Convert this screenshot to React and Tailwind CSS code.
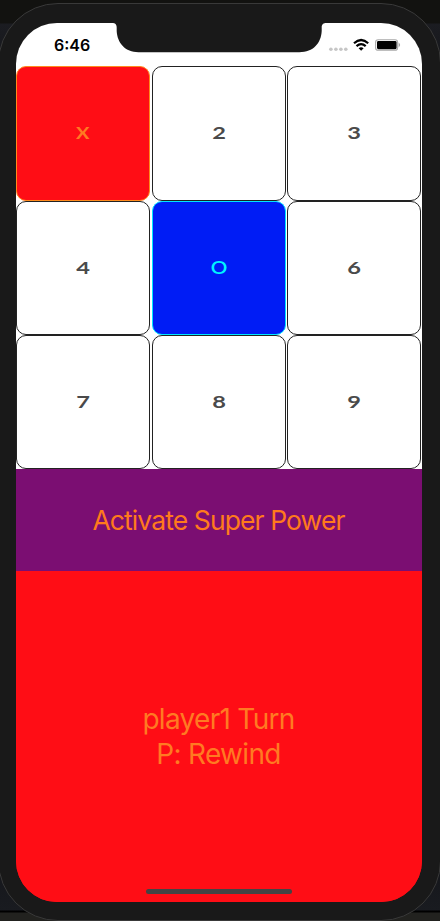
const cells = [
  { label: 'X', style: 'border-[#ff8a1c] bg-[#ff0d15] text-[#ff7a22]', text: 'scale-x-[1.15] font-bold' },
  { label: '2' },
  { label: '3' },
  { label: '4' },
  { label: 'O', style: 'border-[#00e5ff] bg-[#001cf5] text-[#00f4ff]', text: 'scale-x-[1.18] font-semibold' },
  { label: '6' },
  { label: '7' },
  { label: '8' },
  { label: '9' },
];

function StatusIcons() {
  return (
    <svg className="absolute top-[15px] left-[312px]" width="76" height="16" viewBox="0 0 76 16">
      <g fill="#c6c6c6">
        <circle cx="2.9" cy="11.2" r="1.8" />
        <circle cx="7.9" cy="11.2" r="1.8" />
        <circle cx="12.9" cy="11.2" r="1.8" />
        <circle cx="17.8" cy="11.2" r="1.8" />
      </g>
      <g fill="none" stroke="#000" strokeWidth="2.2">
        <path d="M26 5.3Q33.1-1.3 40.2 5.3" />
        <path d="M28.5 8.1Q33.1 4 37.7 8.1" />
      </g>
      <path d="M30.6 10.3Q33.1 8.3 35.6 10.3L33.1 12.8Z" />
      <rect x="47.6" y="1.7" width="22" height="10.6" rx="2.6" fill="white" stroke="#a9a9a9" strokeWidth="1.1" />
      <rect x="49" y="3" width="19.6" height="8.2" rx="1.4" />
      <path d="M70.6 4.6q3 2.4 0 4.8z" fill="#a0a0a0" />
    </svg>
  );
}

function Notch() {
  return (
    <svg className="absolute top-0 left-[96px]" width="218" height="30" viewBox="0 0 218 30">
      <path d="M0 0C3.2 0 4.6 1.2 4.6 4.5V8C5.2 20 13 29.2 26 29.2H184C198 29.2 205.4 20 206 8V4.5C206 1.2 207.5 0 211 0Z" fill="#191919" transform="scale(1.018 1)" />
    </svg>
  );
}

export default function App() {
  return (
    <div className="relative h-[921px] w-[440px] overflow-hidden bg-[linear-gradient(to_bottom,#121210_0,#121210_23px,#1b1c21_24px,#111216_110px,#111216_820px,#191b20_910px,#000_911px,#000_912px,#22221f_913px)] font-[Inter,'Liberation_Sans',sans-serif]">
      <div className="-mx-[2px] mt-[3px] h-[918px] w-[443px] rounded-[60px] border border-[#393939] bg-[#191919] pt-[19px] pl-[17px]">
        <main className="relative flex h-[879px] w-[406px] flex-col overflow-hidden rounded-[41px] bg-[linear-gradient(to_bottom,white_50%,#ff0d15_50%)]">
          <header className="h-[43.3px] shrink-0">
            <span className="block pt-[12px] pl-[38px] text-[16px] leading-[20px] font-semibold text-black">6:46</span>
            <Notch />
            <StatusIcons />
          </header>
          <section className="grid h-[403px] shrink-0 grid-cols-[134.4px_134px_134px] grid-rows-[134.3px_134.3px_134.3px] gap-x-[1.3px] bg-white">
            {cells.map(({ label, style, text }) => (
              <button
                key={label}
                className={`flex items-center justify-center rounded-[10px] border ${style || 'border-[#222] bg-white text-[#4a4a4a]'}`}
              >
                <span className={`font-[Lato,sans-serif] text-[17.5px] leading-[20px] ${text || 'scale-x-[1.35] font-bold'}`}>{label}</span>
              </button>
            ))}
          </section>
          <button className="flex h-[102.2px] shrink-0 items-center justify-center bg-[#7b0e72] pt-px pr-px text-[26.5px] tracking-[-0.9px] text-[#ff7a1c]">
            Activate Super Power
          </button>
          <section className="flex grow items-center justify-center bg-[#ff0d15] pr-px text-center text-[28px] leading-[35px] tracking-[-0.7px] text-[#ff7a22]">
            <p>
              player1 Turn
              <br />
              P: Rewind
            </p>
          </section>
          <div className="absolute bottom-[8px] left-[130px] h-[5px] w-[146px] rounded-full bg-[#444]" />
        </main>
      </div>
    </div>
  );
}
